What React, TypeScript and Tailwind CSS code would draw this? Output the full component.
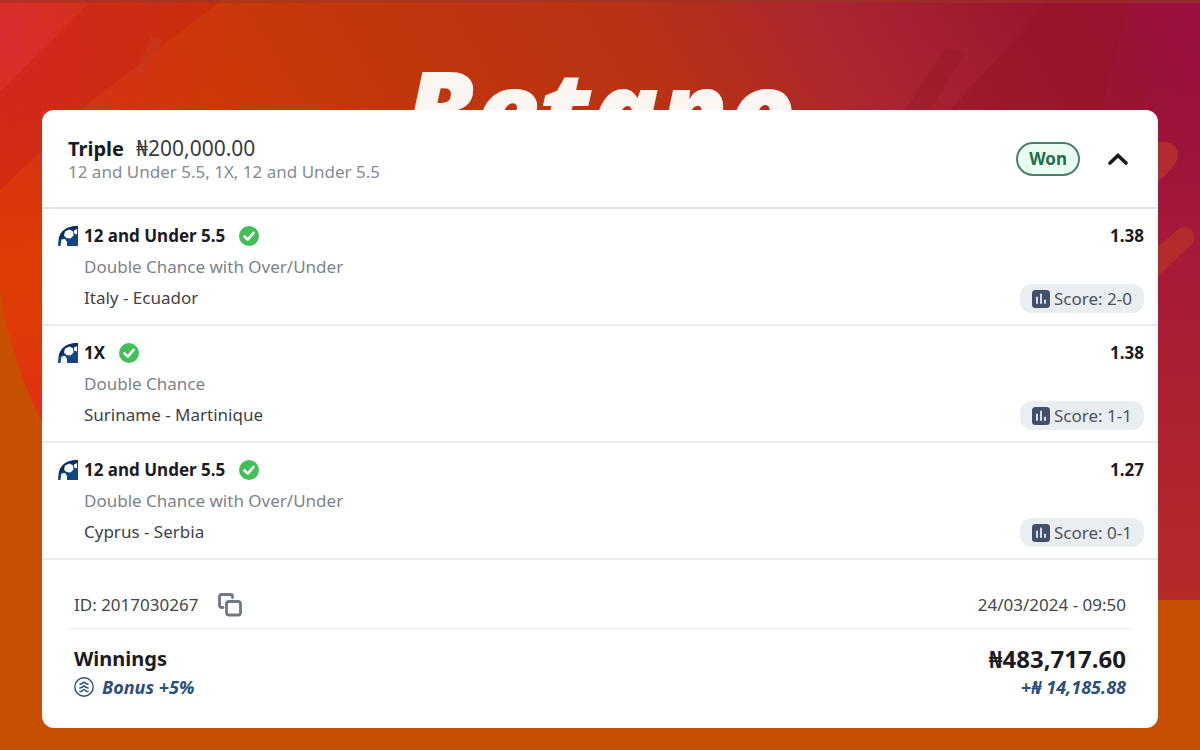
import { useState } from "react";

type Leg = {
  pick: string;
  market: string;
  match: string;
  odds: string;
  score: string;
};

const legs: Leg[] = [
  {
    pick: "12 and Under 5.5",
    market: "Double Chance with Over/Under",
    match: "Italy - Ecuador",
    odds: "1.38",
    score: "2-0",
  },
  {
    pick: "1X",
    market: "Double Chance",
    match: "Suriname - Martinique",
    odds: "1.38",
    score: "1-1",
  },
  {
    pick: "12 and Under 5.5",
    market: "Double Chance with Over/Under",
    match: "Cyprus - Serbia",
    odds: "1.27",
    score: "0-1",
  },
];

const Backdrop = () => (
  <svg
    aria-hidden="true"
    className="absolute inset-0 h-full w-full"
    viewBox="0 0 1200 750"
    preserveAspectRatio="none"
  >
    <defs>
      <linearGradient id="base" x1="0" y1="0.3" x2="1" y2="0">
        <stop offset="0" stopColor="#df3c05" />
        <stop offset="0.3" stopColor="#c5370b" />
        <stop offset="0.55" stopColor="#b93214" />
        <stop offset="0.72" stopColor="#aa2532" />
        <stop offset="0.88" stopColor="#99152f" />
        <stop offset="1" stopColor="#9a1042" />
      </linearGradient>
      <radialGradient id="pink" gradientUnits="userSpaceOnUse" cx="0" cy="35" r="230">
        <stop offset="0" stopColor="#d92c34" />
        <stop offset="1" stopColor="#cc2a14" stopOpacity="0" />
      </radialGradient>
      <linearGradient id="rim" x1="0" y1="0" x2="0" y2="1">
        <stop offset="0.3" stopColor="#df3b08" stopOpacity="0" />
        <stop offset="1" stopColor="#e1271f" />
      </linearGradient>
      <linearGradient id="side" x1="0" y1="0" x2="0" y2="1">
        <stop offset="0" stopColor="#9a1042" stopOpacity="0" />
        <stop offset="0.3" stopColor="#a5183a" />
        <stop offset="1" stopColor="#b72a27" />
      </linearGradient>
    </defs>
    <rect width="1200" height="750" fill="#c75000" />
    <path d="M0 0H1200V600H200C110 560 20 420 0 290Z" fill="url(#base)" />
    <path d="M0 200H60V450C30 410 8 345 0 290Z" fill="url(#rim)" />
    <rect width="230" height="270" fill="url(#pink)" />
    <path d="M92 0H222L80 110H42V150L0 190V92Z" fill="#c62012" opacity="0.4" />
    <path d="M150 38Q158 34 162 42L146 74Q138 80 137 70Z" fill="#c9371c" opacity="0.7" />
    <rect x="1140" y="60" width="60" height="540" fill="url(#side)" />
    <path d="M1050 0H1130L1100 110H950Z" fill="#941527" opacity="0.45" />
    <path d="M945 48L965 54L930 110H905Z" fill="#981a25" opacity="0.5" />
    <path d="M1158 142C1174 140 1182 150 1176 162C1172 170 1166 175 1158 181Z" fill="#b32c31" />
    <path d="M1158 247L1180 228C1190 224 1197 233 1193 243L1158 276Z" fill="#b32c29" />
    <rect width="1200" height="3" fill="#9d3325" opacity="0.6" />
  </svg>
);

const BallIcon = () => (
  <svg aria-hidden="true" className="h-5 w-5 shrink-0" viewBox="0 0 20 20">
    <path d="M20 0V20H0C0 7 7 0 20 0Z" fill="#124685" />
    <path d="M20 0C8 0 2 5 0.500 14L6 11L7 5L12 3.500L17 4L20 3Z" fill="#0b2f5c" />
    <path
      d="M7 5.500L11.500 3.500L15 5.500L15.500 9.500L12.500 12.500L8.500 12L6 9.500ZM16 4.500L19 3V8.500L16 7.500ZM3.500 13.500L7 13L9 16V20H2.500Z"
      fill="#fff"
    />
  </svg>
);

const CheckIcon = () => (
  <svg role="img" aria-label="Won" className="h-5 w-5 shrink-0" viewBox="0 0 20 20">
    <circle cx="10" cy="10" r="10" fill="#43bf57" />
    <path
      d="M5.500 10.500L8.800 13.600L14.500 6.800"
      fill="none"
      stroke="#fff"
      strokeWidth="2.600"
      strokeLinecap="round"
      strokeLinejoin="round"
    />
  </svg>
);

const StatsIcon = () => (
  <svg aria-hidden="true" className="h-[18px] w-[18px] shrink-0" viewBox="0 0 18 18">
    <rect width="18" height="18" rx="3.500" fill="#445069" />
    <path
      d="M5 7.500V13M9 4.500V13M13 10.500V13"
      stroke="#e9ecf0"
      strokeWidth="1.800"
      strokeLinecap="round"
    />
  </svg>
);

const CopyIcon = () => (
  <svg
    aria-hidden="true"
    className="h-6 w-6"
    viewBox="0 0 24 24"
    fill="none"
    stroke="#6f7887"
    strokeWidth="2.800"
    strokeLinecap="round"
    strokeLinejoin="round"
  >
    <rect x="8.500" y="8.500" width="14" height="13.500" rx="2.500" />
    <path d="M5 14.500H3.500A2 2 0 0 1 1.500 12.500V3.500A2 2 0 0 1 3.500 1.500H12.500A2 2 0 0 1 14.500 3.500V4.500" />
  </svg>
);

const BonusIcon = () => (
  <svg
    aria-hidden="true"
    className="h-5 w-5 shrink-0"
    viewBox="0 0 20 20"
    fill="none"
    stroke="#2a4f7c"
    strokeWidth="1.400"
    strokeLinecap="round"
    strokeLinejoin="round"
  >
    <circle cx="10" cy="10" r="9.200" />
    <path d="M6 7.300Q8.500 6.800 10 5Q11.500 6.800 14 7.300M6 11Q8.500 10.500 10 8.700Q11.500 10.500 14 11M6 14.700Q8.500 14.200 10 12.400Q11.500 14.200 14 14.700" />
  </svg>
);

const LegRow = ({ leg }: { leg: Leg }) => (
  <li className="flex justify-between border-b-2 border-[#e9ebee] pt-[11px] pr-3.5 pb-[11px] pl-4 text-[17px] leading-[31px]">
    <div>
      <div className="flex items-center gap-1.5">
        <BallIcon />
        <h2 className="font-bold text-[#1b1c1f]">{leg.pick}</h2>
        <span className="pl-2">
          <CheckIcon />
        </span>
      </div>
      <p className="pl-[26px] text-[#7c828b]">{leg.market}</p>
      <p className="pl-[26px] text-[#3f4247]">{leg.match}</p>
    </div>
    <div className="flex flex-col items-end justify-between">
      <span className="font-bold text-[#1b1c1f]">{leg.odds}</span>
      <span className="flex items-center gap-1 rounded-xl bg-[#ebeef1] px-3 leading-[29px] text-[#4d535e]">
        <StatsIcon />
        Score: {leg.score}
      </span>
    </div>
  </li>
);

const App = () => {
  const [open, setOpen] = useState(true);

  const copyId = () => {
    navigator.clipboard?.writeText("2017030267");
  };

  return (
    <div className="relative min-h-screen bg-[#c75000] font-['Noto_Sans',sans-serif]">
      <Backdrop />
      <div className="relative px-[42px] pb-[22px]">
        <header className="flex h-[110px] justify-center pt-[49px]">
          <span className="font-['Open_Sans',sans-serif] text-[112px] leading-[120px] font-extrabold text-[#fbf6f1] italic">
            Betano
          </span>
        </header>

        <main className="relative rounded-xl bg-white">
          <section className="flex items-start justify-between border-b-2 border-[#e3e4e6] px-[26px] pt-[26px] pb-6">
            <div>
              <h1 className="text-[21px] leading-6 text-[#3a3b3f]">
                <strong className="mr-3 text-xl leading-6 font-bold text-[#1b1c1f]">Triple</strong>
                ₦200,000.00
              </h1>
              <p className="text-[17px] leading-[22px] text-[#858b94]">
                12 and Under 5.5, 1X, 12 and Under 5.5
              </p>
            </div>
            <div className="flex items-center gap-6 pt-1.5">
              <span className="rounded-full border-2 border-[#4c7f68] bg-[#e9fdf3] px-[11px] text-[17px] leading-[30px] font-bold text-[#216e4a]">
                Won
              </span>
              <button
                type="button"
                aria-label="Toggle bet details"
                aria-expanded={open}
                onClick={() => setOpen(!open)}
                className="flex h-8 w-7 items-center justify-center"
              >
                <svg className="h-3 w-5" viewBox="0 0 20 12" fill="none">
                  <path
                    d="M2 10L10 2.500L18 10"
                    stroke="#1b1c1f"
                    strokeWidth="3.600"
                    strokeLinecap="round"
                  />
                </svg>
              </button>
            </div>
          </section>

          {open && (
            <ul>
              {legs.map((leg, idx) => (
                <LegRow key={idx} leg={leg} />
              ))}
            </ul>
          )}

          <section className="px-[26px] pt-[30px] pb-[27px]">
            <div className="flex items-center justify-between border-b border-[#e6e8ea] px-1.5 pb-2 text-[17px] leading-[30px] text-[#44474c]">
              <div className="flex items-center gap-5">
                <span>ID: 2017030267</span>
                <button type="button" aria-label="Copy bet ID" onClick={copyId}>
                  <CopyIcon />
                </button>
              </div>
              <time dateTime="2024-03-24T09:50">24/03/2024 - 09:50</time>
            </div>

            <div className="flex items-end justify-between px-1.5 pt-4">
              <div>
                <h2 className="text-xl leading-7 font-bold text-[#1b1c1f]">Winnings</h2>
                <p className="flex items-center gap-2 text-lg leading-7 font-bold text-[#2a4f7c] italic">
                  <BonusIcon />
                  Bonus +5%
                </p>
              </div>
              <div className="text-right">
                <p className="text-2xl leading-7 font-bold text-[#1b1c1f]">₦483,717.60</p>
                <p className="text-lg leading-7 font-bold text-[#2a4f7c] italic">
                  +₦ 14,185.88
                </p>
              </div>
            </div>
          </section>
        </main>
      </div>
    </div>
  );
};

export default App;
